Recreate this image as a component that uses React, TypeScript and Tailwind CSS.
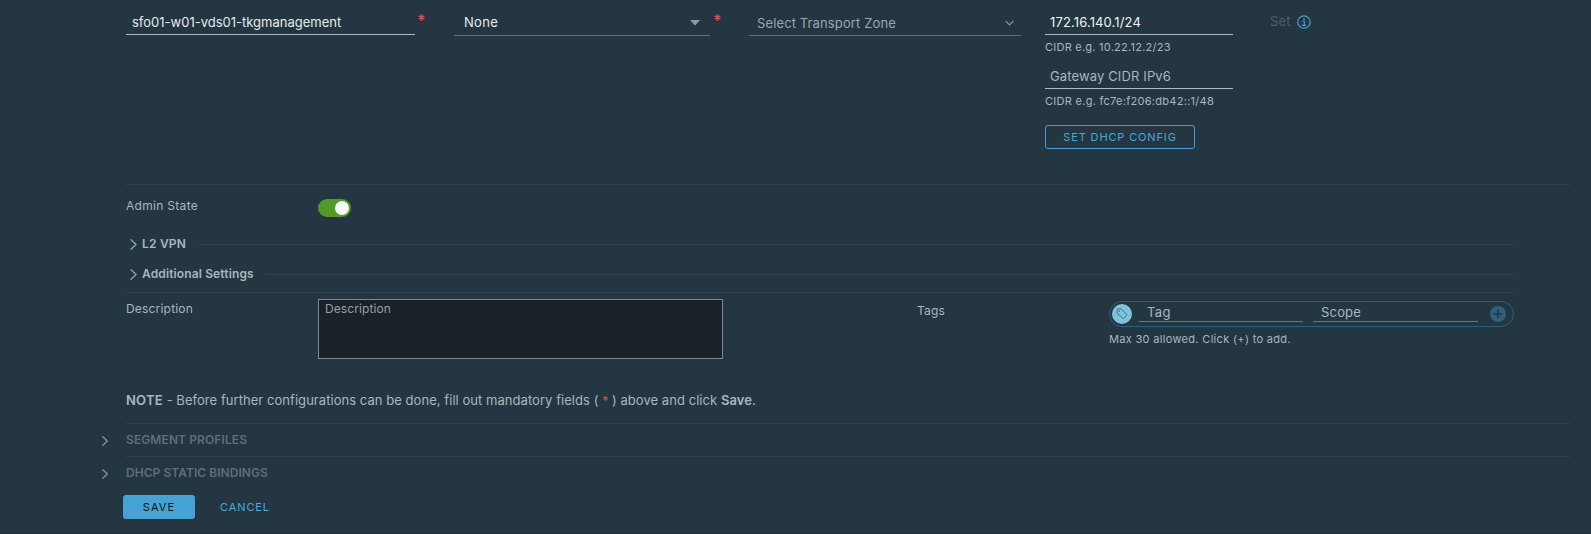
import React from "react";

function Required() {
  return (
    <svg className="h-[7px] w-[7px]" viewBox="0 0 7 7" stroke="#d9534a" strokeWidth="1.5">
      <path d="M3.5 0.3V6.7M0.7 1.9L6.3 5.1M6.3 1.9L0.7 5.1" />
    </svg>
  );
}

function Chevron({ className }: { className: string }) {
  return (
    <svg className={className} viewBox="0 0 6 10" fill="none" stroke="currentColor" strokeWidth="1.2" strokeLinecap="round" strokeLinejoin="round">
      <path d="M0.8 0.7L5.3 5L0.8 9.3" />
    </svg>
  );
}

function Subsection({ title, className }: { title: string; className: string }) {
  return (
    <div className="flex h-[30px] w-[1388px] items-center pl-[4px]">
      <Chevron className="h-[11px] w-[7px] text-[#8fa0a9]" />
      <span className={"ml-[5px] whitespace-nowrap text-[12px] font-semibold leading-4 text-[#a9b6be] " + className}>{title}</span>
      <span className="ml-[12px] h-px flex-1 bg-[#304350]" />
    </div>
  );
}

function LockedSection({ title, className }: { title: string; className: string }) {
  return (
    <div className="flex h-[33px] pl-[102px]">
      <Chevron className="mt-[13px] h-[10px] w-[6px] text-[#8099a5]" />
      <div className="ml-[18px] w-[1444px] border-t border-[#2e424e] pt-[8px]">
        <span className={"block whitespace-nowrap text-[12px] font-semibold leading-4 text-[#5d6f7b] " + className}>{title}</span>
      </div>
    </div>
  );
}

export default function App() {
  return (
    <div className="flex h-[534px] w-[1591px] flex-col overflow-hidden border-b border-[#1d2d37] bg-[#243641] font-['Inter',sans-serif] text-[13px] text-[#a9b6be]">
      <div className="flex h-[184px] shrink-0 items-start pl-[126px]">
        <div className="h-[35px] w-[289px] border-b border-[#acbac3] pl-[6px] pt-[13px] leading-[18px] text-[#e6eaed]">
          <span>sfo01-w01-vds01-tkgmanagement</span>
        </div>
        <div className="ml-[3px] mt-[14px] w-[7px]"><Required /></div>
        <div className="ml-[29px] flex h-[36px] w-[256px] justify-between border-b border-[#60717e] pl-[10px] pr-[10px] pt-[13px] leading-[18px] text-[#e6eaed]">
          <span className="tracking-[0.3px]">None</span>
          <svg className="mt-[7px] h-[6px] w-[10px]" viewBox="0 0 10 6" fill="#94989b"><path d="M0 0H10L5 5.6Z" /></svg>
        </div>
        <div className="ml-[4px] mt-[14px] w-[7px]"><Required /></div>
        <div className="ml-[28px] flex h-[36px] w-[272px] justify-between border-b border-[#60717e] pl-[8px] pr-[7px] pt-[14px] leading-[18px] text-[#9aa7ae]">
          <span className="tracking-[0.12px]">Select Transport Zone</span>
          <svg className="mt-[6px] h-[6px] w-[9px]" viewBox="0 0 9 6" fill="none" stroke="#899ba6" strokeWidth="1.1"><path d="M0.6 0.8L4.5 4.9L8.4 0.8" /></svg>
        </div>
        <div className="ml-[24px] flex w-[188px] flex-col items-start">
          <div className="h-[35px] w-full border-b border-[#acbac3] pl-[5px] pt-[13px] leading-[18px] text-[#f0f3f5]">
            <span className="tracking-[0.13px]">172.16.140.1/24</span>
          </div>
          <p className="mt-[4px] whitespace-nowrap text-[11px] leading-4 tracking-[0.24px]">CIDR e.g. 10.22.12.2/23</p>
          <div className="mt-[2px] h-[32px] w-full border-b border-[#acbac3] pl-[5px] pt-[10px] leading-[18px]">
            <span className="tracking-[0.13px]">Gateway CIDR IPv6</span>
          </div>
          <p className="mt-[4px] whitespace-nowrap text-[11px] leading-4 tracking-[0.28px]">CIDR e.g. fc7e:f206:db42::1/48</p>
          <button className="mt-[16px] h-[24px] w-[150px] whitespace-nowrap rounded-[3px] border border-[#42a3d4] text-[11px] leading-[22px] tracking-[0.86px] text-[#49a9da]">SET DHCP CONFIG</button>
        </div>
        <div className="ml-[37px] mt-[12px] flex items-start">
          <span className="leading-[18px] tracking-[0.2px] text-[#4d5f6a]">Set</span>
          <svg className="ml-[6px] mt-[3px] h-[14px] w-[14px]" viewBox="0 0 14 14" fill="none" stroke="#429fcb" strokeWidth="1.2">
            <circle cx="7" cy="7" r="6.2" />
            <path d="M5.3 6H7.3V10.2M5 10.3H9.2" />
            <circle cx="7" cy="3.9" r="0.8" fill="#429fcb" stroke="none" />
          </svg>
        </div>
      </div>

      <div className="ml-[126px] flex h-[45px] w-[1444px] shrink-0 border-t border-[#304350]">
        <span className="mt-[13px] w-[192px] text-[12px] leading-4 tracking-[0.3px]">Admin State</span>
        <span className="mt-[14px] flex h-[18px] w-[33px] items-center justify-end rounded-full bg-[#539b27] pr-[2px]">
          <span className="h-[14px] w-[14px] rounded-full bg-[#fafafa]" />
        </span>
      </div>
      <div className="ml-[126px] shrink-0">
        <Subsection title="L2 VPN" className="tracking-[0.2px]" />
        <Subsection title="Additional Settings" className="tracking-[0.13px]" />
      </div>

      <div className="ml-[126px] mt-[3px] flex h-[99px] w-[1388px] shrink-0 border-t border-[#304350]">
        <span className="mt-[8px] w-[192px] text-[12px] leading-4 tracking-[0.19px]">Description</span>
        <div className="mt-[6px] h-[60px] w-[405px] border border-[#7b8c95] bg-[#1a2128] px-[6px] pt-px text-[12px] leading-4 tracking-[0.1px] text-[#999fa3]">Description</div>
        <span className="ml-[194px] mt-[10px] w-[192px] text-[12px] leading-4 tracking-[0.2px]">Tags</span>
        <div className="mt-[8px] w-[405px]">
          <div className="flex h-[26px] items-center rounded-full border border-[#2d607e] pl-[2px] pr-[7px]">
            <span className="flex h-[20px] w-[20px] items-center justify-center rounded-full bg-[#80c4db]">
              <svg className="h-[12px] w-[12px]" viewBox="0 0 12 12" fill="none" stroke="#397590" strokeWidth="1" strokeLinejoin="round">
                <path d="M1 1.8Q1 1 1.8 1H5.4L10.6 6.4Q11 6.9 10.6 7.4L7.8 10.3Q7.3 10.7 6.8 10.3L1 5.1Z" />
                <circle cx="3.3" cy="3.2" r="0.7" fill="#285b72" stroke="none" />
              </svg>
            </span>
            <span className="ml-[7px] mb-[4px] h-[20px] w-[164px] border-b border-[#687983] pl-[8px] leading-[20px] tracking-[0.35px]">Tag</span>
            <span className="ml-[10px] mb-[4px] h-[20px] w-[165px] border-b border-[#687983] pl-[8px] leading-[20px] tracking-[0.18px]">Scope</span>
            <svg className="ml-auto h-[16px] w-[16px]" viewBox="0 0 16 16">
              <circle cx="8" cy="8" r="8" fill="#2e627c" />
              <path d="M8 4V12M4 8H12" stroke="#223946" strokeWidth="1.6" strokeLinecap="round" />
            </svg>
          </div>
          <p className="mt-[4px] whitespace-nowrap text-[11px] leading-4 tracking-[0.32px]">Max 30 allowed. Click (+) to add.</p>
        </div>
      </div>

      <p className="ml-[126px] h-[32px] shrink-0 whitespace-nowrap leading-[18px] tracking-[0.05px]">
        <b className="font-semibold tracking-[0.25px]">NOTE</b> - Before further configurations can be done, fill out mandatory fields ( <span className="text-[12px] text-[#df4d48]">*</span> ) above and click <b className="font-semibold">Save</b>.
      </p>
      <LockedSection title="SEGMENT PROFILES" className="tracking-[0.1px]" />
      <LockedSection title="DHCP STATIC BINDINGS" className="tracking-[0.05px]" />

      <div className="ml-[123px] mt-[6px] flex h-[24px] items-center text-[11px]">
        <button className="h-[24px] w-[72px] rounded-[3px] bg-[#44a3d4] tracking-[1.1px] text-[#06141d]">SAVE</button>
        <button className="ml-[25px] tracking-[0.9px] text-[#49a9da]">CANCEL</button>
      </div>
    </div>
  );
}
